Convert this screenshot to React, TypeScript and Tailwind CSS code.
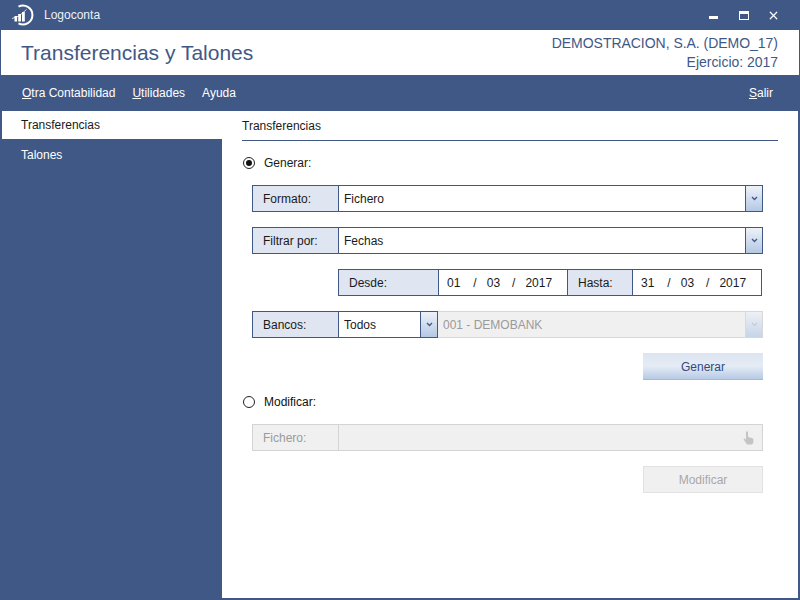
import { X } from "lucide-react";

const Chevron = ({ muted = false }: { muted?: boolean }) => (
  <svg width="7" height="5" viewBox="0 0 7 5" fill="none">
    <path d="M1 1l2.5 2.5L6 1" stroke={muted ? "#c3cede" : "#3f5886"} strokeWidth="1.3" />
  </svg>
);

const Arrow = ({ muted = false }: { muted?: boolean }) => (
  <div
    className={`w-[17px] shrink-0 flex items-center justify-center border-l ${
      muted
        ? "border-[#d5d9e0] bg-gradient-to-b from-[#eef1f6] to-[#c6d4e8]"
        : "border-[#3f5886] bg-gradient-to-b from-[#eef2f8] to-[#b4c8e4]"
    }`}
  >
    <Chevron muted={muted} />
  </div>
);

const Label = ({ children, className = "" }: { children: string; className?: string }) => (
  <div className={`flex items-center bg-[#dfe6f1] text-[#1a1a1a] border-r border-[#3f5886] ${className}`}>{children}</div>
);

const Logo = () => (
  <svg width="24" height="24" viewBox="0 0 24 24" fill="none">
    <path d="M7.5 3.6A9.5 9.5 0 1 1 7.5 20.4" stroke="#fff" strokeWidth="2" />
    <rect x="3.5" y="13" width="2.6" height="5.5" fill="#fff" />
    <rect x="7.2" y="11" width="2.8" height="7.5" fill="#fff" />
    <rect x="11" y="9" width="2.8" height="9.5" fill="#fff" />
    <path d="M1 15.5L8 13l7.5-6.5" stroke="#fff" strokeWidth="0.8" />
  </svg>
);

const DatePart = ({ d, m, y }: { d: string; m: string; y: string }) => (
  <div className="flex-1 flex items-center pl-[8px] text-[#1a1a1a] whitespace-pre">
    <span>{d}</span>
    <span className="ml-[13px]">/</span>
    <span className="ml-[10px]">{m}</span>
    <span className="ml-[12px]">/</span>
    <span className="ml-[10px]">{y}</span>
  </div>
);

export default function App() {
  return (
    <div
      className="w-[800px] h-[600px] flex flex-col overflow-hidden bg-[#3f5886] text-[12px]"
      style={{ fontFamily: '"Liberation Sans", Arial, sans-serif' }}
    >
      {/* Title bar */}
      <div className="h-[30px] shrink-0 flex items-center pl-[11px] pr-[20px] text-white">
        <Logo />
        <span className="ml-[9px] text-[#eef1f6]">Logoconta</span>
        <div className="ml-auto flex items-center">
          <div className="w-[9px] h-[3px] mt-[5px] bg-white" />
          <div className="ml-[21px] w-[10px] h-[9px] border border-white border-t-[3px]" />
          <X size={13} strokeWidth={2.2} className="ml-[18px] text-white" />
        </div>
      </div>

      {/* Header */}
      <div className="h-[45px] shrink-0 ml-[1px] mr-[1px] bg-white flex items-center justify-between pl-[20px] pr-[21px] text-[#3f5886]">
        <h1 className="text-[21px]">Transferencias y Talones</h1>
        <div className="text-right text-[14px] leading-[19px] pt-[1px] tracking-[-0.03px]">
          <div>DEMOSTRACION, S.A. (DEMO_17)</div>
          <div>Ejercicio: 2017</div>
        </div>
      </div>

      {/* Menu */}
      <div className="h-[36px] shrink-0 flex items-center pl-[22px] pr-[27px] text-white">
        <span><u>O</u>tra Contabilidad</span>
        <span className="ml-[17px]"><u>U</u>tilidades</span>
        <span className="ml-[17px]">Ayuda</span>
        <span className="ml-auto"><u>S</u>alir</span>
      </div>

      <div className="flex-1 flex min-h-0 pb-[2px] pr-[2px]">
        {/* Sidebar */}
        <div className="w-[222px] shrink-0 pl-[2px] text-white">
          <div className="h-[28px] pl-[19px] flex items-center bg-white text-[#1a1a1a]">Transferencias</div>
          <div className="h-[32px] pl-[19px] flex items-center">Talones</div>
        </div>

        {/* Content */}
        <div className="flex-1 bg-white pl-[20px] pr-[20px]">
          <div className="h-[30px] pt-[6px] border-b border-[#3f5886] text-[#1a1a1a]">Transferencias</div>

          <div className="flex items-center h-[14px] mt-[15px] text-[#1a1a1a]">
            <div className="w-[12px] h-[12px] ml-[1px] rounded-full border border-[#222] flex items-center justify-center">
              <div className="w-[6px] h-[6px] rounded-full bg-[#111]" />
            </div>
            <span className="ml-[9px]">Generar:</span>
          </div>

          <div className="w-[511px] ml-[10px] mt-[15px]">
            <div className="h-[27px] flex border border-[#3f5886] text-[#1a1a1a]">
              <Label className="w-[86px] pl-[10px]">Formato:</Label>
              <div className="flex-1 flex items-center pl-[5px]">Fichero</div>
              <Arrow />
            </div>

            <div className="h-[27px] mt-[15px] flex border border-[#3f5886] text-[#1a1a1a]">
              <Label className="w-[86px] pl-[10px]">Filtrar por:</Label>
              <div className="flex-1 flex items-center pl-[5px]">Fechas</div>
              <Arrow />
            </div>

            <div className="h-[27px] w-[424px] ml-[86px] mt-[15px] flex border border-[#3f5886]">
              <Label className="w-[100px] pl-[10px]">Desde:</Label>
              <div className="w-[128px] flex">
                <DatePart d="01" m="03" y="2017" />
              </div>
              <Label className="w-[66px] pl-[10px] border-l">Hasta:</Label>
              <DatePart d="31" m="03" y="2017" />
            </div>

            <div className="h-[27px] mt-[15px] flex text-[#1a1a1a]">
              <div className="w-[186px] flex border border-[#3f5886]">
                <Label className="w-[86px] pl-[10px]">Bancos:</Label>
                <div className="flex-1 flex items-center pl-[5px]">Todos</div>
                <Arrow />
              </div>
              <div className="flex-1 flex border border-l-0 border-[#d8d8d8] bg-[#f0f0f0] text-[#9a9a9a]">
                <div className="flex-1 flex items-center pl-[5px]">001 - DEMOBANK</div>
                <Arrow muted />
              </div>
            </div>

            <div className="flex justify-end mt-[15px]">
              <button className="w-[120px] h-[27px] pt-[1px] bg-gradient-to-b from-[#dbe4f1] via-[#e6ecf5] to-[#b7cae5] border-b border-[#a9b8cf] text-[#33497a]">
                Generar
              </button>
            </div>
          </div>

          <div className="flex items-center h-[14px] mt-[15px] text-[#111]">
            <div className="w-[12px] h-[12px] ml-[1px] rounded-full border border-[#222]" />
            <span className="ml-[9px]">Modificar:</span>
          </div>

          <div className="w-[511px] ml-[10px] mt-[15px]">
            <div className="h-[27px] flex border border-[#d4d4d4] bg-[#f0f0f0] text-[#9a9a9a]">
              <div className="w-[86px] pl-[10px] flex items-center border-r border-[#d4d4d4]">Fichero:</div>
              <div className="flex-1 flex items-center justify-end pr-[8px]">
                <svg width="11" height="14" viewBox="0 0 11 14" fill="#c4c4c4">
                  <path d="M3 1.2a1 1 0 0 1 2 0V6l4 .9c1 .3 1.4 1 1.4 2V11c0 1.5-1 2.6-2.6 2.6H5.6c-1 0-1.7-.4-2.3-1.2L.8 8.8c-.5-.8.5-1.6 1.2-1L3 8.8z" />
                </svg>
              </div>
            </div>

            <div className="flex justify-end mt-[15px]">
              <button className="w-[120px] h-[27px] bg-[#f0f0f0] border border-[#e2e2e2] text-[#a8a8a8]">Modificar</button>
            </div>
          </div>
        </div>
      </div>
    </div>
  );
}
